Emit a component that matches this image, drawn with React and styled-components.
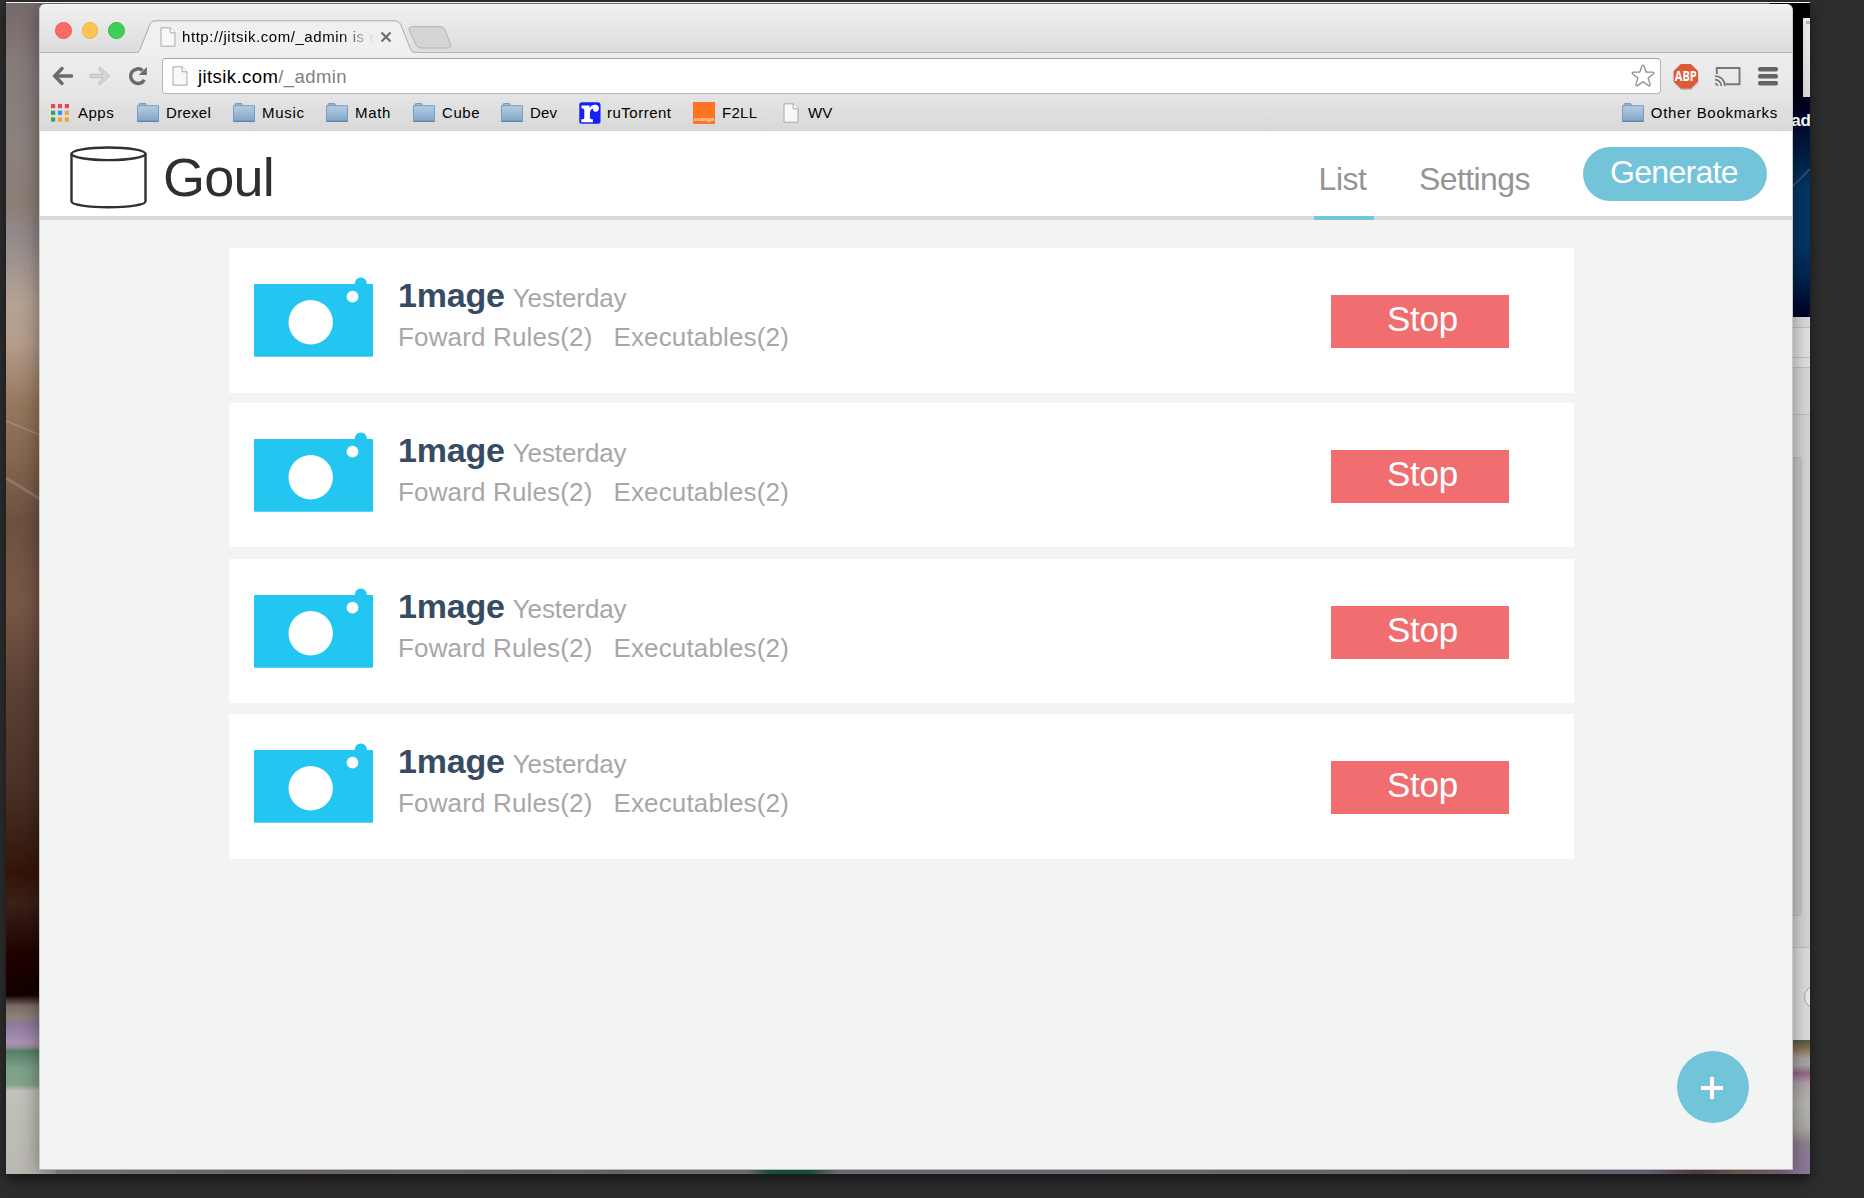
import React from "react";
import styled, { createGlobalStyle } from "styled-components";

const GlobalStyle = createGlobalStyle`
  * { box-sizing: border-box; }
  html, body { margin: 0; padding: 0; background: #2d2d2d; }
  body { font-family: "Liberation Sans", Arial, Helvetica, sans-serif; overflow: hidden; }
  button { font-family: inherit; border: 0; padding: 0; margin: 0; }
  svg { display: block; flex: none; overflow: visible; }
`;

const Screen = styled.div`
  width: 1864px;
  height: 1198px;
  padding: 2px 0 0 6px;
  background: #2d2d2d;
  overflow: hidden;
`;

const Desktop = styled.div`
  position: relative;
  width: 1804px;
  height: 1172px;
  border-top: 1px solid #f4f4f4;
  background: #777;
  box-shadow: 0 6px 12px rgba(0, 0, 0, 0.5);
`;

const Clip = styled.div`
  position: absolute;
  inset: 0;
  overflow: hidden;
`;

const LeftPhoto = styled.div`
  position: absolute;
  left: 0;
  top: 0;
  width: 60px;
  height: 1171px;
  background: linear-gradient(
    to bottom,
    #77696a 0,
    #857b79 60px,
    #8b817e 140px,
    #8d7e76 200px,
    #90898a 230px,
    #b5a294 300px,
    #b59d8a 340px,
    #96785f 400px,
    #876850 450px,
    #6d513f 520px,
    #785845 600px,
    #5a4034 690px,
    #4b3228 780px,
    #3b1f14 840px,
    #341407 870px,
    #3a2017 900px,
    #200300 950px,
    #120000 992px,
    #7c6c65 1003px,
    #8e8078 1014px,
    #907aa0 1022px,
    #aa94b0 1040px,
    #9b8aa0 1044px,
    #568068 1048px,
    #7ca088 1065px,
    #84a38b 1082px,
    #c1c2bb 1088px,
    #bcbcb5 1130px,
    #bbb8b2 1171px
  );
`;

const RightPhoto = styled.div`
  position: absolute;
  right: 0;
  top: 0;
  width: 40px;
  height: 1171px;
  background: linear-gradient(
    to bottom,
    #000 0,
    #000 60px,
    #000018 90px,
    #00082b 118px,
    #001d44 150px,
    #043765 185px,
    #033665 240px,
    #002552 275px,
    #000b35 300px,
    #000421 314px,
    #4a5c48 1037px,
    #8a6a50 1045px,
    #a8a29f 1055px,
    #aaa7a5 1062px,
    #97648d 1070px,
    #aca5ab 1080px,
    #b7b6b0 1100px,
    #aeaba6 1125px,
    #918092 1140px,
    #8c7698 1171px
  );
`;

const BottomPhoto = styled.div`
  position: absolute;
  left: 50px;
  bottom: 0;
  width: 1720px;
  height: 8px;
  background: linear-gradient(
    to right,
    #a3a49c 0,
    #8c9085 190px,
    #948395 260px,
    #8d978f 390px,
    #938394 440px,
    #959192 520px,
    #818993 560px,
    #8c9791 590px,
    #959098 690px,
    #1f6a52 715px,
    #226a55 755px,
    #8d8f9c 780px,
    #9b8ea0 1000px,
    #86878c 1450px,
    #8a8398 1590px,
    #6d4c61 1640px,
    #8c7266 1680px,
    #938090 1720px
  );
`;

const Streaks = styled.svg`
  position: absolute;
  left: 0;
  top: 410px;
`;

const Beam = styled.svg`
  position: absolute;
  right: 0;
  top: 160px;
`;

const BackPanel = styled.div`
  position: absolute;
  right: 0;
  top: 15px;
  width: 7px;
  height: 79px;
  background: linear-gradient(#f2f2f2, #dedede);
`;

const BackPanelMark = styled.div`
  width: 4px;
  height: 3px;
  margin: 3px 0 0 3px;
  background: #aebbdc;
`;

const DesktopLabel = styled.span`
  position: absolute;
  right: -1px;
  top: 108px;
  color: #f4f4f4;
  font-size: 17px;
  line-height: 20px;
  font-weight: bold;
`;

const BackWindow = styled.div`
  position: absolute;
  right: 0;
  top: 314px;
  width: 40px;
  height: 723px;
  display: flex;
  flex-direction: column;
  background: #dcdcdc;
`;

const BackBand = styled.div`
  height: ${(p) => p.$height}px;
  background: ${(p) => p.$color};
  border-bottom: 1px solid #c3c3c3;
`;

const BackBody = styled.div`
  flex: 1;
  padding: 42px 8px 31px 0;
  background: #d6d6d6;
  border-bottom: 1px solid #c3c3c3;
`;

const BackWell = styled.div`
  height: 100%;
  border: 1px solid #c2c2c2;
  border-radius: 4px;
  background: #cbcbcb;
`;

const BackFooter = styled.div`
  height: 92px;
  padding: 37px 0 0 34px;
  overflow: hidden;
  background: #dedede;
`;

const BackKnob = styled.div`
  width: 24px;
  height: 24px;
  border: 1px solid #a5a5a5;
  border-radius: 50%;
  background: #ececec;
`;

const BrowserWindow = styled.div`
  position: absolute;
  left: 33px;
  top: 1px;
  width: 1754px;
  height: 1166px;
  display: flex;
  flex-direction: column;
  overflow: hidden;
  border-radius: 6px 6px 0 0;
  background: #f2f4f4;
  border: 1px solid #c9c9c6;
  border-top-color: #f5f5f5;
  border-bottom-color: #b9bab7;
`;

const WindowShadow = styled.div`
  position: absolute;
  left: 33px;
  top: 1px;
  width: 1754px;
  height: 1166px;
  border-radius: 6px;
  box-shadow: 0 6px 20px rgba(0, 0, 0, 0.42);
`;

const TabStrip = styled.div`
  flex: none;
  height: 48px;
  display: flex;
  align-items: flex-end;
  background: linear-gradient(#f0f0f0, #dcdcdc);
  box-shadow: inset 0 -1px 0 #b3b3b3;
`;

const Lights = styled.div`
  width: 97px;
  height: 48px;
  padding: 17px 0 0 15px;
  display: flex;
  gap: 10px;
`;

const Light = styled.span`
  width: 16.5px;
  height: 16.5px;
  flex: none;
  border-radius: 50%;
  background: ${(p) => p.$color};
  border: 1px solid ${(p) => p.$edge};
`;

const Tab = styled.div`
  position: relative;
  width: 278px;
  height: 33px;
  padding: 1px 0 0 23px;
  display: flex;
  align-items: center;
`;

const TabShape = styled.svg`
  position: absolute;
  left: 0;
  top: 0;
`;

const TabTitle = styled.span`
  position: relative;
  flex: none;
  width: 198px;
  margin-left: 6px;
  white-space: nowrap;
  font-size: 15px;
  line-height: 20px;
  letter-spacing: 0.56px;
  color: #000;
  mask-image: linear-gradient(to right, #000 158px, rgba(0, 0, 0, 0.25) 182px, transparent 193px);
`;

const TabClose = styled.svg`
  position: relative;
`;

const TabIcon = styled.span`
  position: relative;
`;

const NewTab = styled.svg`
  margin: 0 0 4px -7px;
`;

const Toolbar = styled.div`
  flex: none;
  height: 46px;
  padding: 5px 13px 5px 12px;
  display: flex;
  align-items: center;
  background: linear-gradient(#efefef, #e4e4e4);
`;

const NavIcons = styled.div`
  width: 110px;
  display: grid;
  grid-template-columns: 37px 39px 20px;
  align-items: center;
`;

const Omnibox = styled.div`
  width: 1499px;
  height: 36px;
  padding: 0 5px 0 9px;
  display: flex;
  align-items: center;
  background: #fff;
  border: 1px solid #b5b5b5;
  border-top-color: #a5a5a5;
  border-radius: 4px;
`;

const Address = styled.span`
  flex: 1;
  margin: 1px 0 0 10px;
  font-size: 18.5px;
  line-height: 24px;
  letter-spacing: 0.42px;
  color: #000;
`;

const AddressPath = styled.span`
  color: #808080;
`;

const Extensions = styled.div`
  flex: 1;
  padding-left: 12px;
  display: grid;
  grid-template-columns: 41px 44px 20px;
  align-items: center;
`;

const BookmarksBar = styled.div`
  flex: none;
  height: 32px;
  padding: 0 14px 5px 11px;
  display: flex;
  align-items: center;
  background: linear-gradient(#e3e3e3, #d8d8d8);
  box-shadow: inset 0 -1px 0 #d0d0d0;
`;

const Bookmark = styled.div`
  width: ${(p) => (p.$width ? `${p.$width}px` : "auto")};
  margin-left: ${(p) => (p.$end ? "auto" : "0")};
  flex: none;
  display: flex;
  align-items: center;
  gap: ${(p) => p.$gap || 7}px;
  font-size: 15px;
  line-height: 20px;
  letter-spacing: ${(p) => p.$spacing ?? 0.5}px;
  white-space: nowrap;
  color: #000;
`;

const SiteHeader = styled.header`
  flex: none;
  height: 89px;
  padding: 0 25px 0 30px;
  display: flex;
  background: #fff;
  border-bottom: 4px solid #d9dada;
`;

const Brand = styled.div`
  flex: 1;
  display: flex;
  align-items: flex-start;
  padding-top: 15px;
  gap: 15px;
`;

const BrandName = styled.h1`
  margin: 0;
  font-size: 54px;
  line-height: 62px;
  font-weight: normal;
  letter-spacing: -0.8px;
  color: #2f2f2f;
`;

const NavLink = styled.a`
  width: ${(p) => p.$width}px;
  height: 89px;
  margin-right: ${(p) => p.$after}px;
  padding: 11px 3px 0 0;
  text-align: center;
  font-size: 32px;
  line-height: 74px;
  letter-spacing: ${(p) => p.$spacing || 0}px;
  color: #959595;
  background: ${(p) =>
    p.$active ? "linear-gradient(#73c3d9, #73c3d9) bottom / 100% 4px no-repeat" : "none"};
  border-radius: 2px;
`;

const GenerateButton = styled.button`
  width: 184px;
  height: 54px;
  margin-top: 16px;
  padding: 0 2px 3px 0;
  border-radius: 27px;
  background: #73c3d9;
  color: #fff;
  font-size: 32px;
  line-height: 51px;
  letter-spacing: -0.7px;
`;

const Content = styled.main`
  flex: 1;
  position: relative;
  padding: 28px 0 0 189px;
  background: #f2f4f4;
`;

const CardList = styled.div`
  display: grid;
  grid-template-rows: 155px 156px 155px 145px;
`;

const Card = styled.article`
  width: 1345px;
  height: ${(p) => p.$height}px;
  padding: 27px 65px 0 25px;
  display: flex;
  align-items: flex-start;
  background: #fff;
`;

const CardBody = styled.div`
  flex: 1;
  padding-left: 25px;
`;

const CardHeading = styled.div`
  display: flex;
  align-items: baseline;
  gap: 8px;
  height: 40px;
`;

const CardTitle = styled.h2`
  margin: 0;
  font-size: 34px;
  line-height: 40px;
  letter-spacing: -0.2px;
  color: #374b63;
`;

const Muted = styled.span`
  font-size: 26px;
  line-height: 40px;
  letter-spacing: ${(p) => p.$spacing || 0}px;
  color: #a7a7a7;
`;

const CardMeta = styled.div`
  display: flex;
  gap: 21px;
  padding-top: 2px;
`;

const StopButton = styled.button`
  width: 178px;
  height: 53px;
  margin-top: 20px;
  padding: 0 0 6px 5px;
  background: #f06d70;
  color: #fff;
  font-size: 35px;
  line-height: 47px;
  letter-spacing: -0.2px;
`;

const AddButton = styled.button`
  position: absolute;
  right: 43px;
  bottom: 46px;
  width: 72px;
  height: 72px;
  padding: 2px 2px 0 0;
  display: flex;
  align-items: center;
  justify-content: center;
  border-radius: 50%;
  background: #73c3d9;
`;

function PageIcon() {
  return (
    <svg width="16" height="20" viewBox="0 0 16 20">
      <path d="M1 .8h9.2l4.8 5v13.4H1z" fill="#f8f8f8" stroke="#a9a9a9" />
      <path d="M10.2.8v5H15" fill="#fff" stroke="#a9a9a9" />
    </svg>
  );
}

function FolderIcon() {
  return (
    <svg width="22" height="19" viewBox="0 0 22 19">
      <defs>
        <linearGradient id="folder" x1="0" y1="0" x2="0" y2="1">
          <stop offset="0" stopColor="#b5cee3" />
          <stop offset="1" stopColor="#7fa5c8" />
        </linearGradient>
      </defs>
      <path d="M2 4V1.600Q2 .6 3 .6h5.200q1 0 1 1V3" fill="#9dbad3" stroke="#7295b3" />
      <path d="M.5 2.700h21v15.600H.5z" fill="url(#folder)" stroke="#7b9dbc" />
      <path d="M.5 18.300h21" stroke="#587b9a" />
    </svg>
  );
}

const APP_COLORS = [
  "#ef4351", "#ef4351", "#ef4351",
  "#37a35f", "#2e91f0", "#efa636",
  "#37a35f", "#efa636", "#efa636",
];

function AppsIcon() {
  return (
    <svg width="18" height="18" viewBox="0 0 18 18">
      {APP_COLORS.map((color, i) => (
        <rect key={i} x={(i % 3) * 6.9} y={Math.floor(i / 3) * 6.7} width="4.2" height="4.2" fill={color} />
      ))}
    </svg>
  );
}

function RuTorrentIcon() {
  return (
    <svg width="22" height="22" viewBox="0 0 22 22">
      <rect x=".3" y=".3" width="21.2" height="21.4" rx="2.5" fill="#1420f5" />
      <path
        d="M2.500 3.500h8v2.200C12 3.200 15 2 17.800 3c3.300 1.200 2.600 6.800-.9 6.800-2.700 0-3.100-2-2.500-3.300-2.500.3-3.400 2.200-3.400 5v4.300q0 1.400 1.600 1.400h1.300v3H2.300v-3h1.500q1.500 0 1.500-1.500V8q0-1.600-1.500-1.600H2.500z"
        fill="#fff"
      />
    </svg>
  );
}

const OrangeBox = styled.span`
  width: 22px;
  height: 22px;
  padding-top: 13px;
  background: #ff7420;
  color: #ffe3cf;
  font-size: 6px;
  line-height: 8px;
  letter-spacing: 0;
  font-weight: bold;
  text-align: center;
`;

function BackIcon() {
  return (
    <svg width="22" height="20" viewBox="0 0 22 20" fill="none" stroke="#6b6b6b" strokeWidth="3.500">
      <path d="M19.500 10H4" strokeLinecap="round" />
      <path d="M10 2.500 2.800 10l7.200 7.500" strokeLinejoin="miter" strokeLinecap="round" />
    </svg>
  );
}

function ForwardIcon() {
  return (
    <svg width="22" height="20" viewBox="0 0 22 20" fill="#d6d6d6" stroke="#c0c0c0" strokeLinejoin="round">
      <path d="M1 8.300h13.200L9.800 3.600Q9.300 2 11 1.200L20.600 10 11 18.800q-1.700-.8-1.200-2.400l4.400-4.700H1z" />
    </svg>
  );
}

function ReloadIcon() {
  return (
    <svg width="20" height="20" viewBox="0 0 20 20">
      <path d="M16.300 13.800A7.300 7.300 0 1 1 14.600 4.500" fill="none" stroke="#6b6b6b" strokeWidth="3.500" />
      <path d="M18.900 1v8h-8.200z" fill="#6b6b6b" />
    </svg>
  );
}

function StarIcon() {
  return (
    <svg width="24" height="24" viewBox="0 0 24 24" fill="#fff" stroke="#8d8d8d" strokeWidth="1.300" strokeLinejoin="round">
      <path d="M12 1.200q.9 0 1.300 1.300l2 5.700h6.400q2 .4.600 1.700l-5.200 4 2 6.500q.2 1.900-1.500 1.200L12 17.700l-5.600 3.900q-1.700.7-1.500-1.200l2-6.500-5.200-4Q.3 8.600 2.300 8.200h6.400l2-5.700Q11.100 1.200 12 1.200z" />
    </svg>
  );
}

function AdblockIcon() {
  return (
    <svg width="26" height="26" viewBox="0 0 26 26">
      <path d="M8 2.500h10.200l7.200 7.200v10.200l-7.200 7.200H8L.9 19.900V9.700z" fill="#bdbdbd" />
      <path d="M7.800 1h10.100l7.100 7.100v10.200L17.900 25.400H7.800L.6 18.300V8.100z" fill="#dc5b36" />
      <text
        x="12.800"
        y="18.200"
        textAnchor="middle"
        textLength="22"
        lengthAdjust="spacingAndGlyphs"
        fontFamily="Open Sans, Liberation Sans, sans-serif"
        fontWeight="bold"
        fontSize="14"
        fill="#fff"
      >
        ABP
      </text>
    </svg>
  );
}

function CastIcon() {
  return (
    <svg width="27" height="21" viewBox="0 0 27 21" fill="none" stroke="#787878" strokeWidth="2">
      <path d="M2.800 8V2h22.700v16.200H12" />
      <path d="M1 17.500A2.500 2.500 0 0 1 3.500 20M1 13.700A6.300 6.300 0 0 1 7.300 20M1 10A10 10 0 0 1 11 20" strokeWidth="1.700" />
    </svg>
  );
}

function MenuIcon() {
  return (
    <svg width="20" height="19" viewBox="0 0 20 19" fill="#646464">
      <rect y="0" width="20" height="4.500" rx="2" />
      <rect y="7" width="20" height="4.500" rx="2" />
      <rect y="14" width="20" height="4.500" rx="2" />
    </svg>
  );
}

function CylinderLogo() {
  return (
    <svg width="78" height="64" viewBox="0 0 78 64" fill="none" stroke="#303030" strokeWidth="2.400">
      <ellipse cx="38.500" cy="7.800" rx="37" ry="6.300" />
      <path d="M1.500 7.800v47.800c0 3.200 16.500 5.600 37 5.600s37-2.400 37-5.600V7.800" />
    </svg>
  );
}

function CameraIcon() {
  return (
    <svg width="119" height="82" viewBox="0 0 119 82">
      <circle cx="106.800" cy="8.500" r="6" fill="#22c6f0" />
      <rect y="9" width="119" height="72.700" rx="1" fill="#22c6f0" />
      <circle cx="56.700" cy="47.300" r="22.200" fill="#fff" />
      <circle cx="98.500" cy="21.600" r="5.900" fill="#fff" />
    </svg>
  );
}

const FOLDERS = [
  { label: "Drexel", width: 96, spacing: 0.3 },
  { label: "Music", width: 93, spacing: 0.7 },
  { label: "Math", width: 87, spacing: 0.7 },
  { label: "Cube", width: 88, spacing: 0.6 },
  { label: "Dev", width: 78, spacing: 0.2 },
];

const IMAGES = [
  { id: 1, name: "1mage", when: "Yesterday", rules: 2, executables: 2, height: 145 },
  { id: 2, name: "1mage", when: "Yesterday", rules: 2, executables: 2, height: 144 },
  { id: 3, name: "1mage", when: "Yesterday", rules: 2, executables: 2, height: 144 },
  { id: 4, name: "1mage", when: "Yesterday", rules: 2, executables: 2, height: 145 },
];

function Wallpaper() {
  return (
    <Clip>
      <LeftPhoto />
      <RightPhoto />
      <BottomPhoto />
      <Streaks width="40" height="95" fill="none">
        <path d="M0 8 34 22" stroke="#a89a82" strokeWidth="1.500" opacity=".7" />
        <path d="M0 65 34 86" stroke="#97897a" strokeWidth="3" opacity=".6" />
      </Streaks>
      <Beam width="20" height="30">
        <path d="M0 26 20 6" stroke="#5d7a9c" strokeWidth="1.500" opacity=".6" />
      </Beam>
      <BackPanel>
        <BackPanelMark />
      </BackPanel>
      <BackWindow>
        <BackBand $height={11} $color="#dddddd" />
        <BackBand $height={30} $color="#e2e2e2" />
        <BackBand $height={10} $color="#e2e2e2" />
        <BackBand $height={47} $color="#dadada" />
        <BackBody>
          <BackWell />
        </BackBody>
        <BackFooter>
          <BackKnob />
        </BackFooter>
      </BackWindow>
      <WindowShadow />
      <DesktopLabel>ad</DesktopLabel>
    </Clip>
  );
}

function BrowserChrome() {
  return (
    <>
      <TabStrip>
        <Lights>
          <Light $color="#fc6a65" $edge="#ec5e5b" />
          <Light $color="#fdc453" $edge="#edb34a" />
          <Light $color="#41cd57" $edge="#38bd4c" />
        </Lights>
        <Tab>
          <TabShape width="278" height="33" viewBox="0 0 278 33">
            <path
              d="M0 32.500q2-.3 3-3L13 4Q14.500.8 18 .8H258q4 0 5.500 3.200L273.500 29q1.500 3.500 4.500 3.500V33H0z"
              fill="#f0f0f0"
            />
            <path
              d="M0 32.500q2-.3 3-3L13 4Q14.500.8 18 .8H258q4 0 5.500 3.200L273.500 29q1.500 3.500 4.500 3.500"
              fill="none"
              stroke="#aaa"
            />
          </TabShape>
          <TabIcon>
            <PageIcon />
          </TabIcon>
          <TabTitle>http://jitsik.com/_admin is n</TabTitle>
          <TabClose width="12" height="12" viewBox="0 0 12 12" stroke="#6f6f6f" strokeWidth="2.200">
            <path d="m1.500 1.500 9 9M10.500 1.500l-9 9" />
          </TabClose>
        </Tab>
        <NewTab width="44" height="23" viewBox="0 0 44 23">
          <path
            d="M4 .7h28q4 0 5.300 3.300l5 14q1.200 4-2.500 4H13q-3.500 0-5-3.300L1.200 4Q.3.700 4 .7z"
            fill="#d4d4d4"
            stroke="#b3b3b3"
          />
        </NewTab>
      </TabStrip>
      <Toolbar>
        <NavIcons>
          <BackIcon />
          <ForwardIcon />
          <ReloadIcon />
        </NavIcons>
        <Omnibox>
          <PageIcon />
          <Address>
            jitsik.com<AddressPath>/_admin</AddressPath>
          </Address>
          <StarIcon />
        </Omnibox>
        <Extensions>
          <AdblockIcon />
          <CastIcon />
          <MenuIcon />
        </Extensions>
      </Toolbar>
      <BookmarksBar>
        <Bookmark $width={86} $gap={9}>
          <AppsIcon />
          Apps
        </Bookmark>
        {FOLDERS.map((f) => (
          <Bookmark key={f.label} $width={f.width} $spacing={f.spacing}>
            <FolderIcon />
            {f.label}
          </Bookmark>
        ))}
        <Bookmark $width={114} $spacing={0.5} $gap={6}>
          <RuTorrentIcon />
          ruTorrent
        </Bookmark>
        <Bookmark $width={90} $spacing={0.3} $gap={7}>
          <OrangeBox>orange</OrangeBox>
          F2LL
        </Bookmark>
        <Bookmark $width={60} $gap={9} $spacing={0}>
          <PageIcon />
          WV
        </Bookmark>
        <Bookmark $end $spacing={0.7}>
          <FolderIcon />
          Other Bookmarks
        </Bookmark>
      </BookmarksBar>
    </>
  );
}

function ImageCard({ image }) {
  return (
    <Card $height={image.height}>
      <CameraIcon />
      <CardBody>
        <CardHeading>
          <CardTitle>{image.name}</CardTitle>
          <Muted $spacing={-0.1}>{image.when}</Muted>
        </CardHeading>
        <CardMeta>
          <Muted $spacing={0.15}>Foward Rules({image.rules})</Muted>
          <Muted $spacing={0.15}>Executables({image.executables})</Muted>
        </CardMeta>
      </CardBody>
      <StopButton>Stop</StopButton>
    </Card>
  );
}

export default function App() {
  return (
    <Screen>
      <GlobalStyle />
      <Desktop>
        <Wallpaper />
        <BrowserWindow>
          <BrowserChrome />
          <SiteHeader>
            <Brand>
              <CylinderLogo />
              <BrandName>Goul</BrandName>
            </Brand>
            <NavLink $width={60} $after={41} $spacing={-0.5} $active>
              List
            </NavLink>
            <NavLink $width={122} $after={46} $spacing={-0.6}>
              Settings
            </NavLink>
            <GenerateButton>Generate</GenerateButton>
          </SiteHeader>
          <Content>
            <CardList>
              {IMAGES.map((image) => (
                <ImageCard key={image.id} image={image} />
              ))}
            </CardList>
            <AddButton aria-label="Add">
              <svg width="22" height="22" viewBox="0 0 22 22">
                <path d="M11 0v22M0 11h22" stroke="#fff" strokeWidth="4" />
              </svg>
            </AddButton>
          </Content>
        </BrowserWindow>
      </Desktop>
    </Screen>
  );
}
